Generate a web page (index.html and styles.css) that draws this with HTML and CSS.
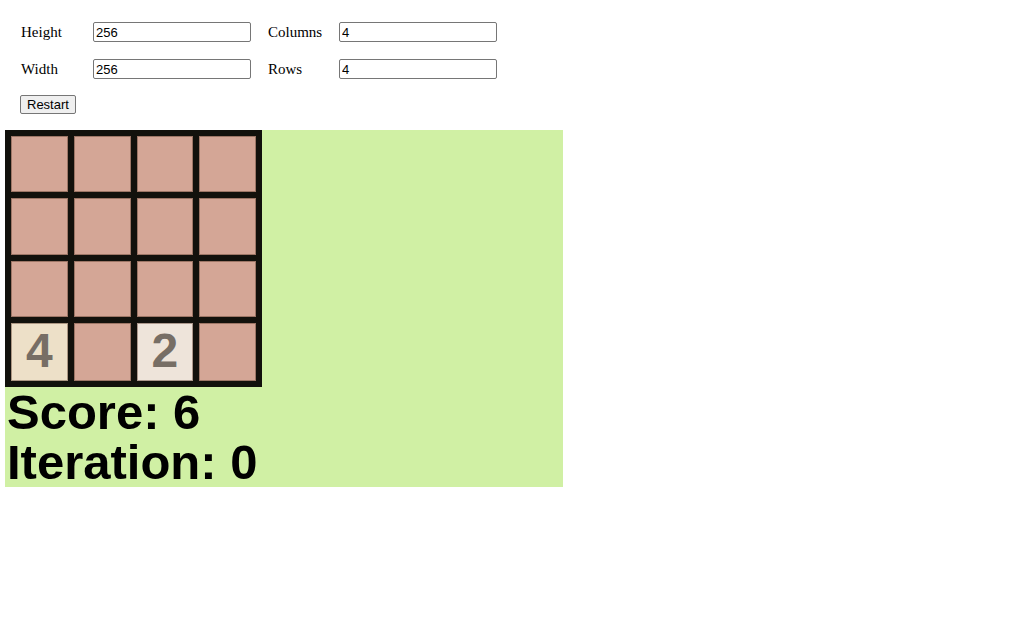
FILE: index.html
```html
<!DOCTYPE html>
<html lang="en">
<head>
  <meta charset="UTF-8">
  <title>2048</title>
  <link rel="stylesheet" href="styles.css">
</head>
<body>
  <form class="controls" onsubmit="return false">
    <label for="height">Height</label>
    <input id="height" type="text" value="256">
    <label for="cols">Columns</label>
    <input id="cols" type="text" value="4">
    <label for="width">Width</label>
    <input id="width" type="text" value="256">
    <label for="rows">Rows</label>
    <input id="rows" type="text" value="4">
    <div class="actions"><button type="button">Restart</button></div>
  </form>
  <div class="game">
    <div class="board">
      <div class="tile"></div><div class="tile"></div><div class="tile"></div><div class="tile"></div>
      <div class="tile"></div><div class="tile"></div><div class="tile"></div><div class="tile"></div>
      <div class="tile"></div><div class="tile"></div><div class="tile"></div><div class="tile"></div>
      <div class="tile t4">4</div><div class="tile"></div><div class="tile t2">2</div><div class="tile"></div>
    </div>
    <div class="stats">
      <div>Score: 6</div>
      <div>Iteration: 0</div>
    </div>
  </div>
</body>
</html>
```

FILE: styles.css
```css
body { margin:0; padding:22px 5px 0; font-family:'Liberation Serif', serif; color:#000; }
.controls { display:grid; grid-template-columns:72px 175px 71px 158px; row-gap:17px; align-items:center; padding-left:16px; font-size:15px; }
.controls input { width:158px; height:20px; box-sizing:border-box; margin:0; padding:1px 2px; border:1px solid #767676; border-radius:2px; font:13px 'Liberation Sans', sans-serif; color:#000; }
.actions { grid-column:1 / -1; margin-top:-1px; }
.actions button { height:19px; padding:0 6px; margin-left:-1px; font:13px 'Liberation Sans', sans-serif; color:#000; background:#efefef; border:1px solid #767676; border-radius:2px; }
.game { width:558px; margin-top:16px; background:#d0f0a4; }
.board { width:257px; height:257px; box-sizing:border-box; padding:6px; background:#12110c; display:grid; grid-template-columns:repeat(4, 1fr); grid-template-rows:repeat(4, 1fr); gap:6px; }
.tile { background:#d4a696; box-shadow:inset 0 0 0 1px rgba(90,60,45,0.45); display:flex; align-items:center; justify-content:center; padding-bottom:3px; font:bold 48px 'Liberation Sans', sans-serif; color:#776e65; }
.tile.t4 { background:#ede0c8; }
.tile.t2 { background:#eee4da; }
.stats { font:bold 49px/50px 'Liberation Sans', sans-serif; padding-left:2px; }
```
